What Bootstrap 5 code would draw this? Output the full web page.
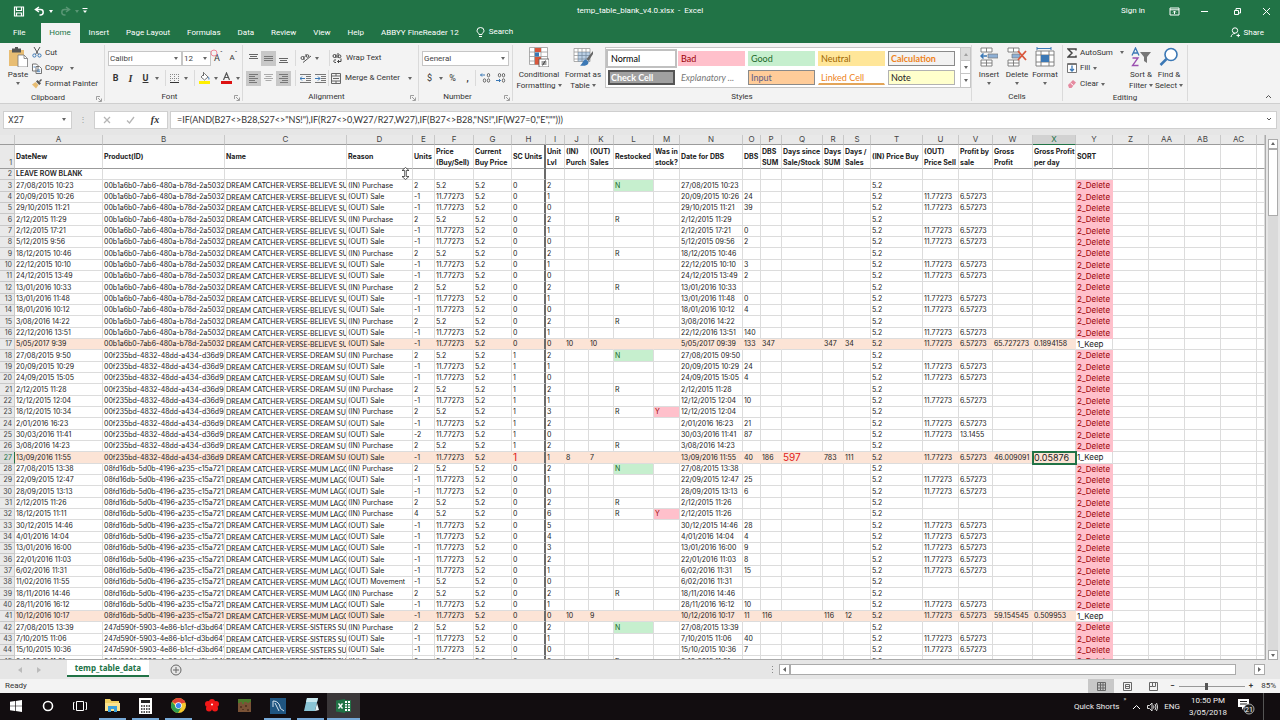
<!DOCTYPE html>
<html lang="en">
<head>
<meta charset="utf-8">
<meta name="viewport" content="width=device-width, initial-scale=1">
<title>temp_table_blank_v4.0.xlsx - Excel</title>
<link href="https://cdn.jsdelivr.net/npm/bootstrap@5.3.0/dist/css/bootstrap.min.css" rel="stylesheet">
<style>
:root{--xl:#217346;--line:#d4d4d4;--ink:#333}
body{font:8px/10px Roboto,"Noto Sans",sans-serif;color:var(--ink);background:#e6e6e6}
button{font:inherit;color:inherit;background:none;border:0;padding:0;line-height:inherit}
svg{display:block;flex:none}
a{color:inherit;text-decoration:none}
.caret{width:0;height:0;border:2px solid transparent;border-top:3px solid #666;border-bottom:0;display:inline-block;flex:none}
.caret.light{border-top-color:#fff}
.titlebar{background:var(--xl);color:#fff;height:22px;display:grid;grid-template-columns:1fr auto 1fr}
.quick{padding-left:12px}.quick button{width:22px}
.winbtns{gap:20px;padding-right:9px}
.tabsbar{background:var(--xl);color:#fff;height:21px;gap:17px;padding:0 16px 0 13px}
.tabsbar .hometab{background:#f3f3f3;color:var(--xl);width:39px;margin:0 -8px 0 -2px;height:20px;align-self:flex-end;display:flex;align-items:center;justify-content:center}
.ribbon{background:#f3f3f3;height:62px;border-bottom:1px solid #cfcfcf}
.grp{display:flex;flex-direction:column;border-right:1px solid #dadada;height:56px;margin-top:2px;flex:none;position:relative}
.grpbody{height:47px;display:flex}
.cap{text-align:center;height:10px;display:flex;justify-content:center;align-items:center;position:relative;padding-top:2px}
.cap svg{position:absolute;right:2px;top:4px}
.two{display:flex;flex-direction:column;gap:2px;padding:4px 0 0 3px}
.two>div{display:flex;height:18px;align-items:center}
.ib{width:15px;height:15px;display:flex;align-items:center;justify-content:center;flex:none;font-size:9px}
.ib.on{background:#c8c8c8}
.cr{width:8px;display:flex;justify-content:center}
.vs{width:1px;height:16px;background:#dadada;margin:0 2px 0 4px}
.g-clip{width:105px}.g-font{width:138px}.g-align{width:176px}.g-num{width:94px}.g-style{width:459px}.g-cell{width:91px}.g-edit{width:125px}
.three{display:flex;flex-direction:column}
.three button{display:flex;align-items:center;height:15px;gap:3px}
.three button+button{height:16px}
.big{display:flex;flex-direction:column;align-items:center;width:28px;line-height:11px;white-space:nowrap}
.big svg{height:20px;margin:2px 0 2px}
.big .caret{margin-top:2px}
.big.wide{width:44px}
.form-select.sel{font:8px/13px Roboto,sans-serif;color:#444;border:1px solid #c6c6c6;border-radius:0;height:15px;padding:0 8px 0 1px;background:#fff url("data:image/svg+xml,%3Csvg xmlns='http://www.w3.org/2000/svg' viewBox='0 0 4 3'%3E%3Cpath d='M0 0h4L2 3z' fill='%23666'/%3E%3C/svg%3E") no-repeat right 3px center/4px 3px}
.w-face{width:74px}.w-size{width:29px}.w-numfmt{width:87px}
.gallery{display:grid;grid-template-columns:1fr 10px;border:1px solid #c6c6c6;background:#fff;height:41px;margin-top:2px;padding-left:2px;width:366px}
.gallery .cells{display:grid;grid-template-columns:repeat(5,67px);gap:4px 3px;align-content:center}
.cells button{height:15px;text-align:left;font:9px/13px Lato,sans-serif;padding-left:2px;border:1px solid transparent;overflow:hidden;white-space:nowrap}
.cells .s-normal{outline:2px solid #c0c0c0;color:#000}
.cells .s-bad{background:#ffc0cb;color:#9c0006}.cells .s-good{background:#c6efce;color:#1d6a2b}.cells .s-neu{background:#ffe699;color:#9c6500}
.cells .s-calc{background:#f2f2f2;color:#ee8322;font-weight:700;border-color:#8a8a8a}
.cells .s-check{background:#a0a0a0;color:#fff;font-weight:700;border:2px solid #555;line-height:11px;padding-left:1px}
.cells .s-exp{font-style:italic;color:#777}
.cells .s-input{background:#ffcc99;color:#5c5c86;border-color:#8a8a8a}
.cells .s-link{color:#ee8322;border-bottom:2px solid #e2a458}
.cells .s-note{background:#ffffcc;color:#222;border-color:#b2b2b2}
.gscroll{display:grid;grid-template-rows:repeat(3,1fr);border-left:1px solid #c6c6c6}
.gscroll button{display:flex;align-items:center;justify-content:center;border-bottom:1px solid #c6c6c6}
.gscroll button:first-child{background:#ddd}
.up{rotate:180deg}
.fbar{height:31px;padding:7px 3px 6px;gap:2px}
.fbar>*{background:#fff;border:1px solid #cfcfcf;height:18px}
.namebox{width:69px;position:relative}
.namebox input{border:0;background:none;width:100%;font-size:9px;color:#444;padding:0 0 0 4px;height:16px;display:block;outline:0}
.namebox .caret{position:absolute;right:5px;top:6px}
.fbar .dots{background:none;border:0;width:18px;color:#999;justify-content:center}
.fxs{width:74px;justify-content:space-around}
.fxlabel{font:italic bold 10px "Liberation Serif",serif}
.formula input{font:9px/14px Lato,sans-serif;color:#333;border:0;outline:0;padding:0 0 0 6px;background:none}
.workarea{min-height:0;background:#e6e6e6}
.sheetwrap{min-width:0;overflow:hidden;border-right:1px solid #ababab;border-bottom:1px solid #ababab}
table.xl{table-layout:fixed;width:100%;border-collapse:separate;border-spacing:0;font:7px/10px Inter,Lato,sans-serif;color:#222;background:#fff}
.xl th,.xl td{padding:0 0 0 1px;height:11px;border-right:1px solid #dcdcdc;border-bottom:1px solid #dcdcdc;white-space:nowrap;overflow:hidden;vertical-align:middle}
.xl tbody tr:nth-child(3n) td,.xl tbody tr:nth-child(3n) th{height:12px;line-height:11px}
.xl thead th,.xl tbody tr th{font-weight:400;text-align:center;background:#e9e9e9;color:#444;padding:0;border-color:#c8c8c8}
.xl thead th{height:10px;line-height:9px;font-size:8px;border-bottom-color:#9b9b9b}
.xl thead th.cur{background:#d2d2d2;color:var(--xl);border-bottom:1px solid var(--xl)}
.xl tbody tr th{text-align:right;padding-right:2px}
.xl tbody tr.cur th{background:#dcdcdc;color:var(--xl);border-right:1px solid var(--xl)}
.xl tbody tr.titles td{height:24px;line-height:11px;font-weight:700;border-bottom-color:#9b9b9b;padding-top:1px}
.xl tbody tr.titles th{height:24px;vertical-align:bottom;border-bottom-color:#9b9b9b}
.xl tbody tr.blank td{font-weight:600}
.xl tbody td.pname{font-family:Lato,sans-serif}
.xl tr td:nth-child(9){border-right:2px solid #6b6b6b}
.xl tr.tot td:nth-child(-n+25){background:#fce4d6;border-right-color:#fce4d6}
.xl tr.tot td:nth-child(9){border-right-color:#6b6b6b}
.xl td.dl{background:#ffc0cb;color:#9c0006;border-color:#ffc0cb;font-size:8px}
.xl td.kp{font-size:8px}
.xl td.nn{background:#c6efce;color:#1d6a2b}
.xl td.yy{background:#ffc0cb;color:#9c0006}
.xl td.red{color:#e02020;font-size:10px}
.xl tr.tot td.active{outline:2px solid var(--xl);outline-offset:-1px;font-size:9px;position:relative}
.vscroll{width:14px;padding:4px 2px 0 2px}
.vscroll .btnbox{width:10px;height:10px}
.btnbox{background:#fff;border:1px solid #ababab;display:flex;align-items:center;justify-content:center;flex:none;width:11px;height:11px}
.vscroll .track{background:#dadada}.vscroll .thumb{background:#fff;border:1px solid #ababab;height:67px}
.sheetbar{height:19px}
.sheetnav{gap:15px;padding:0 26px 0 18px}
.sheettab{width:82px;height:17px;background:#fff;color:var(--xl);font:700 8px/16px "Noto Sans",sans-serif;border-bottom:2px solid var(--xl);text-align:center;margin-right:21px}
.hscroll{width:494px;margin-right:15px}
.hscroll .thumb{background:#fff;border:1px solid #ababab;height:11px;margin-right:18px}
.status{height:14px;background:#f3f3f3;padding-left:5px}
.view{width:26px;height:14px;display:flex;align-items:center;justify-content:center}
.view.on{background:#c8c8c8}
.zoomer{appearance:none;width:66px;height:10px;background:linear-gradient(#999,#999) center/100% 1px no-repeat;margin:0}
.zoomer::-webkit-slider-thumb{appearance:none;width:3px;height:7px;background:#555}
.taskbar{height:27px;background:#120d10;color:#eee}
.taskbar .task{width:27px;height:27px;margin:0 3px;display:flex;align-items:center;justify-content:center;border-bottom:2px solid transparent}
.taskbar .task:nth-child(-n+3){width:26px}
.taskbar .run{border-bottom-color:#76a9d8}
.taskbar .act{background:#3a3739;width:33px;margin:0}
.tray{gap:6px}
.clock{line-height:12px;margin:0 5px 0 3px}
.peek{width:1px;height:27px;background:#555;margin:0 16px 0 2px}
.rowcursor{position:absolute;left:401px;top:167px}
.clickring{position:absolute;left:210px;top:49px}
</style>
</head>
<body class="vh-100 d-flex flex-column overflow-hidden position-relative">
<header>
 <div class="titlebar align-items-center">
  <div class="quick d-flex align-items-center">
   <button aria-label="Save"><svg width="14" height="11" viewBox="0 0 14 11"><path d="M2.500 1h9v9h-9zM4.500 1v3.500h5V1M4.500 10V7h5v3" fill="none" stroke="#fff" stroke-width="1.200"/></svg></button>
   <button class="d-flex align-items-center gap-1" aria-label="Undo"><svg width="11" height="10" viewBox="0 0 11 10"><path d="M5 1L1.500 3.500 5 6M2 3.500h4.500a2.700 2.700 0 0 1 0 5.400H5.500" fill="none" stroke="#fff" stroke-width="1.500"/></svg><i class="caret light"></i></button>
   <button class="d-flex align-items-center gap-1 opacity-25 ms-1" aria-label="Redo"><svg width="11" height="10" viewBox="0 0 11 10"><path d="M6 1l3.500 2.500L6 6M9 3.500H4.500a2.700 2.700 0 0 0 0 5.400h1" fill="none" stroke="#fff" stroke-width="1.500"/></svg><i class="caret light"></i></button>
   <button aria-label="Customise toolbar"><svg width="9" height="6" viewBox="3 0 9 6"><path d="M3.500 .5h5" stroke="#fff"/><path d="M4 2.500h4L6 5z" fill="#fff"/></svg></button>
  </div>
  <div class="text-center">temp_table_blank_v4.0.xlsx &nbsp;- &nbsp;Excel</div>
  <div class="winbtns d-flex align-items-center justify-content-end">
   <button class="me-1">Sign in</button>
   <button aria-label="Ribbon options"><svg width="11" height="9" viewBox="0 0 11 9" fill="none" stroke="#fff"><path d="M1 1h9v7H1zM1 2.800h9M5.500 7V4M4 5.500L5.500 4 7 5.500"/></svg></button>
   <button aria-label="Minimise"><svg width="9" height="9"><path d="M1 4.500h7" stroke="#fff"/></svg></button>
   <button aria-label="Restore" class="ms-1"><svg width="9" height="9" fill="none" stroke="#fff"><path d="M1.500 3.500h4v4h-4zM3 3V1.500h4.500V6H6"/></svg></button>
   <button aria-label="Close"><svg width="9" height="9"><path d="M1 1l7 7M8 1L1 8" stroke="#fff"/></svg></button>
  </div>
 </div>
 <nav class="tabsbar d-flex align-items-center">
  <a href="#">File</a><a href="#" class="hometab">Home</a><a href="#">Insert</a><a href="#">Page Layout</a><a href="#">Formulas</a><a href="#">Data</a><a href="#">Review</a><a href="#">View</a><a href="#">Help</a><a href="#">ABBYY FineReader 12</a>
  <a href="#" class="d-flex gap-1"><svg width="9" height="11" viewBox="0 0 9 11" fill="none" stroke="#fff"><path d="M3 7.500C3 6 1 5.500 1 3.800a3.500 3.300 0 0 1 7 0C8 5.500 6 6 6 7.500zM3 9.500h3"/></svg>Search</a>
  <button class="ms-auto d-flex gap-1 align-items-center"><svg width="10" height="11" viewBox="0 0 10 11" fill="none" stroke="#fff"><circle cx="5" cy="3.500" r="2.700"/><path d="M1 10c.5-2.500 2-3.500 4-3.500M6.500 8.500h3.500M8.300 6.700v3.500"/></svg>Share</button>
 </nav>
</header>

<section class="ribbon d-flex">
 <div class="grp g-clip"><div class="grpbody">
   <button class="big ms-1"><svg width="20" height="20" viewBox="0 0 20 20"><path d="M1 3h15v16H1z" fill="#e8bd73"/><path d="M4 1.500h9v4H4z" fill="#555"/><path d="M7 0h3v2H7z" fill="#555"/><path d="M10 8h6l3.500 3.500V20H10z" fill="#fff" stroke="#777" stroke-width=".8"/><path d="M16 8v3.500h3.500" fill="none" stroke="#777" stroke-width=".8"/></svg>Paste<i class="caret"></i></button>
   <div class="three">
    <button><svg width="10" height="11" viewBox="0 0 10 11" fill="none"><path d="M2 0l4.500 7.500M8 0L3.500 7.500" stroke="#555"/><circle cx="2.400" cy="8.500" r="1.600" stroke="#3b78b5"/><circle cx="7.500" cy="8.500" r="1.600" stroke="#3b78b5"/></svg>Cut</button>
    <button><svg width="10" height="11" viewBox="0 0 10 11" fill="#fff" stroke="#666" stroke-width=".9"><path d="M.5 1h4L6 2.500V8H.5zM4 3.500h3.500L9.500 5.500v5H4z"/><path d="M5.200 7h3M5.200 8.700h3M1.500 4h2" stroke="#3b78b5"/></svg>Copy<i class="caret ms-1"></i></button>
    <button><svg width="10" height="10" viewBox="0 0 10 10"><path d="M0 5.500l3.500-2.500 3 3L4 9.500z" fill="#e8bd73"/><path d="M4 2.500L5.500 1 9 4.300 7.300 5.900zM7 2l2-2 1 1-2 2z" fill="#555"/></svg>Format Painter</button>
   </div></div><div class="cap pe-2">Clipboard<svg width="6" height="6"><use href="#launch"/></svg></div></div>

 <div class="grp g-font"><div class="grpbody two">
   <div><select class="form-select sel w-face" aria-label="Font"><option>Calibri</option></select><select class="form-select sel w-size" aria-label="Font size"><option>12</option></select><button class="ib" aria-label="Grow font">A<sup>ˆ</sup></button><button class="ib" aria-label="Shrink font"><small>A</small><sup>ˇ</sup></button></div>
   <div><button class="ib fw-bold">B</button><button class="ib fst-italic fxlabel">I</button><button class="ib fw-bold text-decoration-underline">U</button><span class="cr"><i class="caret"></i></span><span class="vs"></span>
    <button class="ib" aria-label="Borders"><svg width="9" height="9" fill="none" stroke="#888" stroke-dasharray="1 1"><path d="M.5 0v9M4.500 0v9M8.500 0v9M0 .5h9M0 4.500h9"/><path d="M0 8.500h9" stroke="#333" stroke-dasharray="none"/></svg></button><span class="cr"><i class="caret"></i></span><span class="vs"></span>
    <button class="ib" aria-label="Fill colour"><svg width="11" height="12" viewBox="0 0 11 12"><path d="M2 5l3.500-3.500L9 5 5.500 8z" fill="#fff" stroke="#555" stroke-width=".8"/><path d="M4.500 0v4" stroke="#555" stroke-width=".8"/><path d="M9 4.500c2 1 1.500 3 .8 3.500z" fill="#3b78b5"/><path d="M0 9h11v3H0z" fill="#ffef00"/></svg></button><span class="cr"><i class="caret"></i></span>
    <button class="ib" aria-label="Font colour"><svg width="11" height="12" viewBox="0 0 11 12"><path d="M2.500 8L5.500 1l3 7M3.500 5.500h4" fill="none" stroke="#555" stroke-width="1.200"/><path d="M0 9h11v3H0z" fill="#d11"/></svg></button><span class="cr"><i class="caret"></i></span></div>
  </div><div class="cap pe-2">Font<svg width="6" height="6"><use href="#launch"/></svg></div></div>

 <div class="grp g-align"><div class="grpbody two">
   <div><button class="ib" aria-label="Top align"><svg width="9" height="9" stroke="#666"><path d="M0 .5h9M1 2.500h7M0 4.500h9"/></svg></button><button class="ib on" aria-label="Middle align"><svg width="9" height="9" stroke="#777"><path d="M0 2.500h9M0 4.500h9M0 6.500h9"/></svg></button><button class="ib" aria-label="Bottom align"><svg width="9" height="9" stroke="#666"><path d="M0 4.500h9M1 6.500h7M0 8.500h9"/></svg></button><span class="vs"></span>
    <button class="ib" aria-label="Orientation"><svg width="12" height="10" viewBox="0 0 12 10" fill="none" stroke="#555"><circle cx="2.500" cy="5" r="1.500"/><path d="M4 3v4M6 1v3"/><circle cx="7.500" cy="3" r="1.300"/><path d="M3 9.500L11 3"/></svg></button><span class="cr me-1"><i class="caret"></i></span><span class="vs"></span>
    <button class="d-flex align-items-center gap-1"><svg width="10" height="11" viewBox="0 0 10 11" fill="none" stroke="#444"><circle cx="2.500" cy="3" r="1.500"/><path d="M4 1.500v3.500M6 0v5"/><circle cx="7.500" cy="3.300" r="1.400"/><path d="M4 7c-3-.8-3 3 0 2.500M9 5.500v3H5.500M7 7L5.500 8.500 7 10"/></svg>Wrap Text</button></div>
   <div><button class="ib on" aria-label="Align left"><svg width="9" height="9" stroke="#777"><path d="M0 .5h9M0 2.500h6M0 4.500h9M0 6.500h6M0 8.500h8"/></svg></button><button class="ib" aria-label="Centre"><svg width="9" height="9" stroke="#aaa"><path d="M0 .5h9M1.500 2.500h6M0 4.500h9M1.500 6.500h6"/></svg></button><button class="ib on" aria-label="Align right"><svg width="9" height="9" stroke="#777"><path d="M0 .5h9M3 2.500h6M0 4.500h9M3 6.500h6M1 8.500h8"/></svg></button><span class="vs"></span>
    <button class="ib" aria-label="Decrease indent"><svg width="11" height="9"><use href="#indent"/><path d="M5 4.500H0M2 2.500L0 4.500l2 2" stroke="#3b78b5" fill="none"/></svg></button><button class="ib" aria-label="Increase indent"><svg width="11" height="9"><use href="#indent"/><path d="M0 4.500h5M3 2.500l2 2-2 2" stroke="#3b78b5" fill="none"/></svg></button><span class="vs ms-0"></span>
    <button class="d-flex align-items-center gap-1"><svg width="10" height="11" viewBox="0 0 10 11" fill="none" stroke="#666"><path d="M.5.5h9v10h-9zM.5 3h9M.5 8h9M5 .5V3M5 8v2.500M2 5.500h6"/></svg>Merge &amp; Center<i class="caret ms-1"></i></button></div>
  </div><div class="cap pe-2">Alignment<svg width="6" height="6"><use href="#launch"/></svg></div></div>

 <div class="grp g-num"><div class="grpbody two">
   <div><select class="form-select sel w-numfmt" aria-label="Number format"><option>General</option></select></div>
   <div><button class="ib">$</button><span class="cr"><i class="caret"></i></span><button class="ib">%</button><button class="ib fw-bold">,</button><span class="vs ms-0"></span>
   <button class="ib" aria-label="Increase decimal"><svg width="11" height="10" viewBox="0 0 11 10" fill="none" stroke="#666"><path d="M5 2H.5M2 .5L.5 2 2 3.500" stroke="#3b78b5"/><ellipse cx="8.500" cy="2.200" rx="1.200" ry="1.700"/><ellipse cx="4.500" cy="7.500" rx="1.200" ry="1.700"/><ellipse cx="8.500" cy="7.500" rx="1.200" ry="1.700"/></svg></button><button class="ib" aria-label="Decrease decimal"><svg width="11" height="10" viewBox="0 0 11 10" fill="none" stroke="#666"><path d="M1 7.500h4.500M4 6l1.500 1.500L4 9" stroke="#3b78b5"/><ellipse cx="4.500" cy="2.200" rx="1.200" ry="1.700"/><ellipse cx="8.500" cy="2.200" rx="1.200" ry="1.700"/><ellipse cx="8.500" cy="7.500" rx="1.200" ry="1.700"/></svg></button></div>
  </div><div class="cap pe-3">Number<svg width="6" height="6"><use href="#launch"/></svg></div></div>

 <div class="grp g-style"><div class="grpbody ps-1">
   <button class="big wide"><svg width="20" height="20" viewBox="0 0 20 20"><path d="M.5.5h18v17H.5zM.5 5h18M.5 9.500h18M.5 14h18M5.500.5v17M12 .5v17" fill="#fff" stroke="#999" stroke-width=".8"/><path d="M6 1h6v4H6zM6 14h4v3.500H6z" fill="#d9573c"/><path d="M6 5.500h4v4H6z" fill="#3b78b5"/><path d="M6 10h6v4H6z" fill="#d9573c"/><path d="M10 12h10v8H10z" fill="#fff" stroke="#555" stroke-width=".8"/><path d="M12.500 15h5M12.500 17h5M16.500 13.500l-3 5" stroke="#333" stroke-width=".9"/></svg><span>Conditional<br>Formatting <i class="caret align-middle m-0"></i></span></button>
   <button class="big wide"><svg width="20" height="20" viewBox="0 0 20 20"><path d="M1 1.500h16v13H1zM1 5h16M1 8.500h16M1 12h16M5 1.500v13M9 1.500v13M13 1.500v13" fill="#fff" stroke="#999" stroke-width=".8"/><path d="M5 5h12v9.500H5z" fill="#3b78b5" opacity=".35"/><path d="M20 4l-6.500 8 2 2L20 7z" fill="#666"/><path d="M13 12.500c-3 0-3 4-6 6 4 1 8.500 0 8.500-3.500z" fill="#3b78b5"/></svg><span>Format as<br>Table <i class="caret align-middle m-0"></i></span></button>
   <div class="gallery"><div class="cells">
     <button class="s-normal">Normal</button><button class="s-bad">Bad</button><button class="s-good">Good</button><button class="s-neu">Neutral</button><button class="s-calc">Calculation</button>
     <button class="s-check">Check Cell</button><button class="s-exp">Explanatory ...</button><button class="s-input">Input</button><button class="s-link">Linked Cell</button><button class="s-note">Note</button></div>
     <div class="gscroll"><button aria-label="Up"><i class="caret up opacity-50"></i></button><button aria-label="Down"><i class="caret"></i></button><button class="border-bottom-0" aria-label="More"><i class="caret"></i></button></div></div>
  </div><div class="cap">Styles</div></div>

 <div class="grp g-cell"><div class="grpbody">
   <div class="d-flex mx-auto">
   <button class="big"><svg width="18" height="20" viewBox="0 0 18 20"><path d="M1 1h11v4H1zM6.500 1v4M1 13h11v6H1zM6.500 13v6M1 16h11" fill="#fff" stroke="#777" stroke-width=".9"/><path d="M8 7h10v4H8z" fill="#8eb0d6" stroke="#777" stroke-width=".7"/><path d="M7 9H1M3.500 6.500L1 9l2.500 2.500" fill="none" stroke="#3b78b5" stroke-width="1.500"/></svg>Insert<i class="caret"></i></button>
   <button class="big"><svg width="20" height="20" viewBox="0 0 20 20"><path d="M1 1h11v4H1zM6.500 1v4M1 13h11v6H1zM6.500 13v6M1 16h11" fill="#fff" stroke="#777" stroke-width=".9"/><path d="M5 7h8v4H5z" fill="#8eb0d6" stroke="#777" stroke-width=".7"/><path d="M11 4l8 9M19 4l-8 9" stroke="#d9573c" stroke-width="1.800"/></svg>Delete<i class="caret"></i></button>
   <button class="big"><svg width="20" height="20" viewBox="0 0 20 20"><path d="M1 4h18v15H1zM1 8h18M1 15h18M6 4v15M14 4v15" fill="#fff" stroke="#777" stroke-width=".9"/><path d="M6 8h8v7H6z" fill="#3b78b5"/><path d="M2 1.500h14M2 0v3M16 0v3" stroke="#3b78b5"/></svg>Format<i class="caret"></i></button></div>
  </div><div class="cap">Cells</div></div>

 <div class="grp g-edit"><div class="grpbody ps-1">
   <div class="three flex-grow-1">
    <button><svg width="10" height="10" viewBox="0 0 10 10"><path d="M9 2.500V1H1l4 4-4 4h8V7.500" fill="none" stroke="#444" stroke-width="1.500"/></svg>AutoSum<i class="caret ms-1"></i></button>
    <button><svg width="10" height="10" viewBox="0 0 10 10"><path d="M.5.5h9v9h-9z" fill="#fff" stroke="#777"/><path d="M.5 1.500h9" stroke="#777"/><path d="M5 2.500v5.500M3 6l2 2 2-2" fill="none" stroke="#3b78b5" stroke-width="1.300"/></svg>Fill<i class="caret"></i></button>
    <button><svg width="10" height="10" viewBox="0 0 10 10"><path d="M1 6l5-5 3 2.500L4.500 9H2z" fill="#e58aa0"/><path d="M3.500 4l3 2.500" stroke="#fff"/></svg>Clear<i class="caret"></i></button>
   </div>
   <button class="big"><svg width="20" height="20" viewBox="0 0 20 20" fill="none"><path d="M1 8.500L4.500 1 8 8.500M2.300 6h4.400" stroke="#3b78b5" stroke-width="1.300"/><path d="M1.500 11h5.500L1.500 18.500H7.500" stroke="#9b4fb0" stroke-width="1.300"/><path d="M9 5h11l-4 5v6l-3-2v-4z" fill="#777"/></svg><span>Sort &amp;<br>Filter <i class="caret align-middle m-0"></i></span></button>
   <button class="big me-1"><svg width="20" height="20" viewBox="0 0 20 20" fill="#fff" stroke="#3b78b5"><circle cx="12" cy="7.500" r="6" stroke-width="1.600"/><path d="M7.500 12L1.500 18" stroke-width="2.500"/></svg><span>Find &amp;<br>Select <i class="caret align-middle m-0"></i></span></button>
  </div><div class="cap">Editing</div></div>
 <button class="ms-auto align-self-end mb-1 me-2" aria-label="Collapse ribbon"><svg width="7" height="5"><path d="M1 4l2.500-2.500L6 4" fill="none" stroke="#555"/></svg></button>
</section>

<section class="fbar d-flex align-items-center">
 <div class="namebox"><input value="X27" aria-label="Name box"><i class="caret"></i></div>
 <div class="dots d-flex align-items-center">⋮</div>
 <div class="fxs d-flex align-items-center"><button aria-label="Cancel"><svg width="8" height="8"><path d="M1 1l6 6M7 1L1 7" stroke="#b5b5b5" stroke-width="1.300"/></svg></button><button aria-label="Enter"><svg width="9" height="8"><path d="M1 4.500L3.500 7 8 1" fill="none" stroke="#b5b5b5" stroke-width="1.300"/></svg></button><button aria-label="Insert function" class="fxlabel">fx</button></div>
 <div class="formula flex-grow-1 d-flex align-items-center pe-1"><input class="flex-grow-1" aria-label="Formula bar" value="=IF(AND(B27&lt;&gt;B28,S27&lt;&gt;&quot;NS!&quot;),IF(R27&lt;&gt;0,W27/R27,W27),IF(B27&lt;&gt;B28,&quot;NS!&quot;,IF(W27=0,&quot;E&quot;,&quot;&quot;)))"><svg width="6" height="5"><path d="M1 1l2 2 2-2" fill="none" stroke="#555"/></svg></div>
</section>

<main class="workarea flex-grow-1 d-flex">
 <div class="sheetwrap flex-grow-1"><table class="xl"><colgroup id="cols"></colgroup><thead><tr id="letters"></tr></thead><tbody id="rows"></tbody></table></div>
 <div class="vscroll d-flex flex-column"><div class="btnbox"><i class="caret up"></i></div><div class="track flex-grow-1"><div class="thumb"></div></div><div class="btnbox"><i class="caret"></i></div></div>
</main>

<footer>
 <div class="sheetbar d-flex">
  <div class="sheetnav d-flex align-items-center"><svg width="4" height="6"><path d="M4 0v6L0 3z" fill="#bbb"/></svg><svg width="4" height="6"><path d="M0 0v6l4-3z" fill="#bbb"/></svg></div>
  <a href="#" class="sheettab">temp_table_data</a>
  <button aria-label="New sheet"><svg width="12" height="12" fill="none" stroke="#666"><circle cx="6" cy="6" r="5"/><path d="M3 6h6M6 3v6"/></svg></button>
  <div class="hscroll ms-auto d-flex align-items-center"><svg width="8" height="8" viewBox="0 0 8 8" fill="#888"><path d="M1 0h1v1H1zM1 3h1v1H1zM1 6h1v1H1z"/></svg><div class="btnbox"><svg width="3" height="5"><path d="M3 0v5L0 2.500z" fill="#666"/></svg></div><div class="thumb flex-grow-1"></div><div class="btnbox"><svg width="3" height="5"><path d="M0 0v5l3-2.500z" fill="#666"/></svg></div></div>
 </div>
 <div class="status d-flex align-items-center">Ready
  <div class="d-flex align-items-center ms-auto">
   <button class="view on" aria-label="Normal view"><svg width="9" height="9" fill="none" stroke="#666"><path d="M.5.5h8v8h-8zM.5 3h8M.5 6h8M3.500.5v8M6 .5v8"/></svg></button>
   <button class="view" aria-label="Page layout view"><svg width="9" height="9" fill="none" stroke="#666"><path d="M.5.5h8v8h-8zM2.500 2.500h4v4h-4zM3 4.500h3"/></svg></button>
   <button class="view" aria-label="Page break view"><svg width="9" height="9" fill="none" stroke="#666"><path d="M.5.5h8v8h-8zM3.500.5v4h3v-4M.5 4.500h3"/></svg></button>
   <button class="fw-bold mx-1" aria-label="Zoom out">−</button><input type="range" class="zoomer" min="0" max="100" value="42" aria-label="Zoom"><button class="fw-bold mx-1" aria-label="Zoom in">+</button><button class="mx-1">85%</button>
  </div></div>
 <div class="taskbar d-flex align-items-center">
  <div class="d-flex">
  <button class="task" aria-label="Start"><svg width="12" height="12" fill="#fff"><path d="M0 1.800l5-.8v4.700H0zM5.700.9L12 0v5.700H5.700zM0 6.300h5V11l-5-.8zM5.700 6.300H12V12l-6.300-.9z"/></svg></button>
  <button class="task" aria-label="Cortana"><svg width="12" height="12" fill="none" stroke="#fff" stroke-width="1.600"><circle cx="6" cy="6" r="4.500"/></svg></button>
  <button class="task" aria-label="Task view"><svg width="14" height="12" fill="none" stroke="#fff"><path d="M3.500 1.500h7v9h-7zM1.500 2.500h-1v7h1M12.500 2.500h1v7h-1"/></svg></button>
  <button class="task run" aria-label="File Explorer"><svg width="15" height="13"><path d="M0 0h5l1.500 2H14v10H0z" fill="#f0cf60"/><path d="M0 4h15v8H0z" fill="#fbe38e"/><path d="M3 7h9v6h-3v-3H6v3H3z" fill="#3aa0dc"/></svg></button>
  <button class="task run" aria-label="Calculator"><svg width="13" height="16"><path d="M0 0h13v16H0z" fill="#fff"/><path d="M2 2h9v3H2z" fill="#222"/><path d="M2 8h9M2 11h9M2 14h9" stroke="#222" stroke-width="1.500" stroke-dasharray="1.500 1"/></svg></button>
  <button class="task run" aria-label="Chrome"><svg width="15" height="15" viewBox="0 0 15 15"><circle cx="7.500" cy="7.500" r="7.500" fill="#f7c92e"/><path d="M7.500 7.500L1 3.700A7.500 7.500 0 0 1 14 3.700z" fill="#e04336"/><path d="M1 3.700A7.500 7.500 0 0 0 7 15l3.500-5.800-5 0z" fill="#2f9e4f"/><path d="M14 3.800H7.500" stroke="#e04336" stroke-width="2"/><circle cx="7.500" cy="7.500" r="3.300" fill="#fff"/><circle cx="7.500" cy="7.500" r="2.600" fill="#4285f4"/></svg></button>
  <button class="task" aria-label="Flower"><svg width="14" height="13" fill="#f01818"><circle cx="7" cy="3" r="3"/><circle cx="3" cy="5" r="3"/><circle cx="11" cy="5" r="3"/><circle cx="4" cy="9.500" r="3"/><circle cx="10" cy="9.500" r="3"/><circle cx="7" cy="7" r="3"/><circle cx="7" cy="5.500" r="1" fill="#fff"/></svg></button>
  <button class="task" aria-label="Minecraft"><svg width="13" height="13"><path d="M0 0h13v13H0z" fill="#7a5236"/><path d="M0 0h13v3h-2v1H9V3H6v2H4V3H2v1H0z" fill="#4d7a2c"/><path d="M2 7h2v2H2zM7 6h2v2H7zM9 10h2v2H9zM4 10h2v1H4z" fill="#553621"/></svg></button>
  <button class="task run" aria-label="MySQL Workbench"><svg width="16" height="16" fill="none"><path d="M0 0h16v16H0z" fill="#1f5581"/><path d="M3 9V3c3 0 5 1 6.500 4l1 3.500L14 13M5 5l4 8" stroke="#d5e4f0"/></svg></button>
  <button class="task run" aria-label="Notepad"><svg width="16" height="15"><path d="M4 0h11l-3 13H1z" fill="#8ac5d6"/><path d="M4 0h11l-1 4H3z" fill="#c9e8ef"/><path d="M12 13l2-8 2 7z" fill="#e8f4f7"/></svg></button>
  <button class="task run act" aria-label="Excel"><svg width="15" height="14"><path d="M8 1.500h6.500v11H8z" fill="#fff" stroke="#217346"/><path d="M9 4.500h5M9 7h5M9 9.500h5M11.500 2v10" stroke="#217346"/><path d="M0 1.500L9 0v14l-9-1.500z" fill="#217346"/><path d="M2.500 4.500l4 5M6.500 4.500l-4 5" stroke="#fff" stroke-width="1.300"/></svg></button>
  </div>
  <div class="tray ms-auto d-flex align-items-center">
   <span class="d-flex">Quick Shorts<sup class="ms-1">»</sup></span>
   <svg width="9" height="6"><path d="M1 5l3.500-3.500L8 5" fill="none" stroke="#fff"/></svg>
   <svg width="11" height="10" fill="none" stroke="#ddd"><path d="M.5 3.500h2L5 1v8L2.500 6.500h-2zM6.500 3.500q1 1.500 0 3M8 2q2 3 0 6M9.500 1q2.500 4 0 8"/></svg>
   <span>ENG</span>
   <span class="clock text-center">10:50 PM<br>3/05/2018</span>
   <svg width="17" height="17" viewBox="0 0 17 17"><path d="M0 1h11v8H6l-2 3V9H0z" fill="#fff"/><path d="M2 3.500h7M2 6h7" stroke="#222"/><circle cx="11" cy="11" r="5" fill="#222" stroke="#ccc" stroke-width=".8"/><text x="11" y="13.500" font-size="7" text-anchor="middle" fill="#fff">21</text></svg>
   <span class="peek"></span>
  </div>
 </div>
</footer>

<svg class="clickring" width="8" height="8"><circle cx="4" cy="4" r="3" fill="none" stroke="#f08a9a"/></svg>
<svg class="rowcursor" width="9" height="13" viewBox="0 0 9 13"><path d="M1 3.500L4.500.5 8 3.500H5.300v6H8L4.500 12.500 1 9.500h2.700v-6z" fill="#fff" stroke="#333" stroke-width=".8"/></svg>
<svg width="0" height="0" class="position-absolute"><defs><g id="launch"><path d="M.5 4V.5H4M2 2l3 3M5.500 2.500v3h-3" fill="none" stroke="#888" stroke-width=".8"/></g><g id="indent"><path d="M0 .5h11M6 2.500h5M6 4.500h5M6 6.500h5M0 8.500h11" stroke="#777"/></g></defs></svg>

<script>
const letters=['','A','B','C','D','E','F','G','H','I','J','K','L','M','N','O','P','Q','R','S','T','U','V','W','X','Y','Z','AA','AB','AC',''];
const widths=[15,88,122,122,66,22,39,38,34,19,24,25,40,26,63,18,21,41,21,27,52,36,34,40,43,37,36,36,36,36];
document.getElementById('cols').innerHTML=widths.map(w=>`<col style="width:${w}px">`).join('')+'<col>';
document.getElementById('letters').innerHTML=letters.map(l=>`<th class="${l==='X'?'cur':''}">${l}</th>`).join('');
const titles=['DateNew','Product(ID)','Name','Reason','Units','Price<br>(Buy/Sell)','Current<br>Buy Price','SC Units','Unit<br>Lvl','(IN)<br>Purch','(OUT)<br>Sales','Restocked','Was in<br>stock?','Date for DBS','DBS','DBS<br>SUM','Days since<br>Sale/Stock','Days<br>SUM','Days /<br>Sales','(IN) Price Buy','(OUT)<br>Price Sell','Profit by<br>sale','Gross<br>Profit','Gross Profit<br>per day','SORT'];
const products=[['00b1a6b0-7ab6-480a-b78d-2a5032','DREAM CATCHER-VERSE-BELIEVE SU'],['00f235bd-4832-48dd-a434-d36d9d','DREAM CATCHER-VERSE-DREAM SU'],['08fd16db-5d0b-4196-a235-c15a721','DREAM CATCHER-VERSE-MUM LAGO'],['247d590f-5903-4e86-b1cf-d3bd641','DREAM CATCHER-VERSE-SISTERS SU']];
// product | date | units | level | restock flag | stock flag | DBS date (if different) | DBS
const moves=`0|27/08/2015 10:23|2|2|N
0|20/09/2015 10:26|-1|1||||24
0|29/10/2015 11:21|-1|0||||39
0|2/12/2015 11:29|2|2|R
0|2/12/2015 17:21|-1|1||||0
0|5/12/2015 9:56|-1|0|||5/12/2015 09:56|2
0|18/12/2015 10:46|2|2|R
0|22/12/2015 10:10|-1|1||||3
0|24/12/2015 13:49|-1|0||||2
0|13/01/2016 10:33|2|2|R
0|13/01/2016 11:48|-1|1||||0
0|18/01/2016 10:12|-1|0||||4
0|3/08/2016 14:22|2|2|R
0|22/12/2016 13:51|-1|1||||140
0|5/05/2017 9:39|-1|0|||5/05/2017 09:39|133
1|27/08/2015 9:50|2|2|N||27/08/2015 09:50
1|20/09/2015 10:29|-1|1||||24
1|24/09/2015 15:05|-1|0||||4
1|2/12/2015 11:28|2|2|R
1|12/12/2015 12:04|-1|1||||10
1|18/12/2015 10:34|2|3|R|Y|12/12/2015 12:04
1|2/01/2016 16:23|-1|2||||21
1|30/03/2016 11:41|-2|0||||87
1|3/08/2016 14:23|2|2|R
1|13/09/2016 11:55|-1|1||||40
2|27/08/2015 13:38|2|2|N
2|22/09/2015 12:47|-1|1||||25
2|28/09/2015 13:13|-1|0||||6
2|2/12/2015 11:26|2|2|R
2|18/12/2015 11:11|4|6|R|Y|2/12/2015 11:26
2|30/12/2015 14:46|-1|5||||28
2|4/01/2016 14:04|-1|4||||4
2|13/01/2016 16:00|-1|3||||9
2|22/01/2016 11:03|-1|2||||8
2|6/02/2016 11:31|-1|1||||15
2|11/02/2016 11:55|-1|0|||6/02/2016 11:31
2|18/11/2016 14:46|2|2|R
2|28/11/2016 16:12|-1|1||||10
2|10/12/2016 10:17|-1|0||||11
3|27/08/2015 13:39|2|2|N
3|7/10/2015 11:06|-1|1||||40
3|15/10/2015 10:36|-1|0||||7
3|2/12/2015 11:31|2|2|R`.split('\n');
const totals={17:['10','10','347','','347','34','65.727273','0.1894158'],27:['8','7','186','597','783','111','46.009091','0.05876'],41:['10','9','116','','116','12','59.154545','0.509953']};
const cells=a=>a.map(c=>`<td>${c}</td>`).join('');
const pad=n=>'<td></td>'.repeat(n);
let html=`<tr class="titles"><th>1</th>${cells(titles)}${pad(5)}</tr><tr class="blank"><th>2</th><td>LEAVE ROW BLANK</td>${pad(29)}</tr>`;
moves.forEach((line,i)=>{
 const n=i+3,[p,date,u,lvl,rs='',st='',d2='',dbs='']=line.split('|');
 const t=totals[n]||Array(8).fill(''),sale=u<0&&n!==38,price=sale?'11.77273':'5.2';
 const reason=n===38?'(OUT) Movement':sale?'(OUT) Sale':'(IN) Purchase';
 const profit=!sale?'':u==='-2'?'13.1455':'6.57273';
 const row=[date,...products[p],reason,u,price,'5.2',p==='1'?'1':'0',lvl,t[0],t[1],rs,st,d2||date,dbs,t[2],t[3],t[4],t[5],'5.2',sale?price:'',profit,t[6],t[7],totals[n]?'1_Keep':'2_Delete'];
 const cls={2:'pname',11:rs==='N'?'nn':'',12:st?'yy':'',24:totals[n]?'kp':'dl'};
 if(n===27){cls[7]='red';cls[16]='red';cls[23]='active'}
 html+=`<tr class="${totals[n]?'tot':''} ${n===27?'cur':''}"><th>${n}</th>${row.map((c,k)=>`<td${cls[k]?` class="${cls[k]}"`:''}>${c}</td>`).join('')}${pad(5)}</tr>`;
});
document.getElementById('rows').innerHTML=html;
</script>
<script src="https://cdn.jsdelivr.net/npm/bootstrap@5.3.0/dist/js/bootstrap.bundle.min.js"></script>
</body>
</html>
